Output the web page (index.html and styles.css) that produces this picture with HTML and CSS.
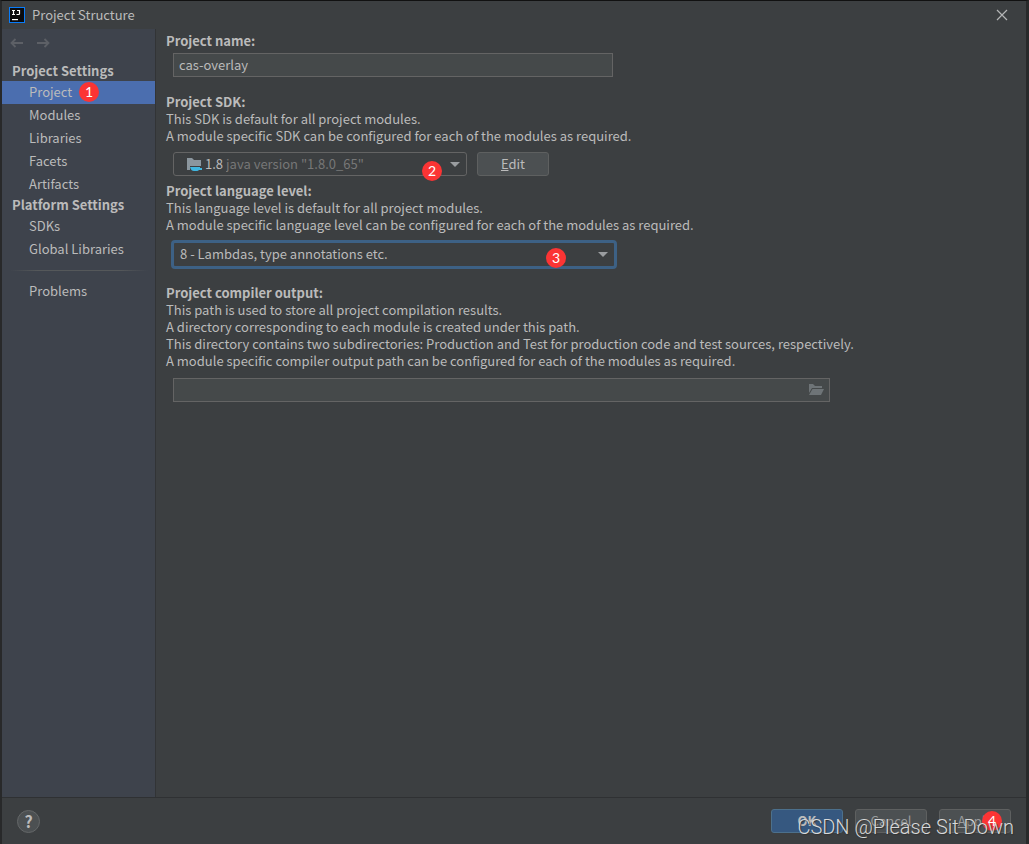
FILE: index.html
```html
<!DOCTYPE html>
<html lang="en">
<head>
<meta charset="utf-8">
<title>Project Structure</title>
<meta name="viewport" content="width=device-width, initial-scale=1">
<link rel="stylesheet" href="styles.css">
</head>
<body>
<div class="dialog">
  <header class="titlebar">
    <svg class="logo" width="16" height="16" viewBox="0 0 16 16" aria-hidden="true">
      <rect width="16" height="16" fill="#087cfa"/>
      <rect x="1" y="1" width="14" height="14" fill="#0b0b0d"/>
      <path d="M3 3.500h3M4.500 3.500v4M3 7.500h3M8 3.500h2.500v3.200q0 .8-.8.8H7.500" fill="none" stroke="#fff" stroke-width="1.200"/>
      <path d="M3 12h6v1.200H3z" fill="#fff"/>
    </svg>
    <h1 class="title">Project Structure</h1>
    <button class="close" type="button" aria-label="Close">
      <svg width="12" height="12" viewBox="0 0 12 12"><path d="M1 1l10 10M11 1L1 11" stroke="#b4b5b6" stroke-width="1.200" fill="none"/></svg>
    </button>
  </header>

  <div class="content">
    <aside class="sidebar">
      <div class="history">
        <button class="arrow" type="button" aria-label="Back"><svg width="14" height="12" viewBox="0 0 14 12"><path d="M13 6H1.500M5.500 2L1.500 6l4 4" fill="none" stroke="#5d6066" stroke-width="1.800"/></svg></button>
        <button class="arrow" type="button" aria-label="Forward"><svg width="14" height="12" viewBox="0 0 14 12"><path d="M0 6h11.500M7.500 2l4 4-4 4" fill="none" stroke="#5d6066" stroke-width="1.800"/></svg></button>
      </div>
      <nav class="nav">
        <h2 class="group">Project Settings</h2>
        <a class="item selected" href="#project">Project<span class="badge badge-project">1</span></a>
        <a class="item" href="#modules">Modules</a>
        <a class="item" href="#libraries">Libraries</a>
        <a class="item" href="#facets">Facets</a>
        <a class="item" href="#artifacts">Artifacts</a>
        <h2 class="group">Platform Settings</h2>
        <a class="item" href="#sdks">SDKs</a>
        <a class="item" href="#global">Global Libraries</a>
        <hr class="rule">
        <a class="item" href="#problems">Problems</a>
      </nav>
    </aside>

    <main class="panel">
      <section class="section section-name">
        <label class="heading" for="name">Project name:</label>
        <input class="field name" id="name" type="text" value="cas-overlay">
      </section>

      <section class="section section-sdk">
        <label class="heading" for="sdk">Project SDK:</label>
        <p>This SDK is default for all project modules.</p>
        <p>A module specific SDK can be configured for each of the modules as required.</p>
        <div class="row">
          <div class="combo sdk">
            <svg class="folder" width="16" height="16" viewBox="0 0 16 16" aria-hidden="true">
              <path d="M1 2h5l2 2h7v6H4v4H1z" fill="#8b969e"/>
              <path d="M4 11h10v1h2v2h-3c-.6.700-1.200 1-2 1H8c-1.800 0-3-1-4-4z" fill="#40b6e0"/>
            </svg>
            <span class="version">1.8</span>
            <select class="choice muted" id="sdk"><option>java version "1.8.0_65"</option></select>
            <span class="badge badge-sdk">2</span>
          </div>
          <button class="button" type="button"><u>E</u>dit</button>
        </div>
      </section>

      <section class="section section-level">
        <label class="heading" for="level">Project language level:</label>
        <p>This language level is default for all project modules.</p>
        <p>A module specific language level can be configured for each of the modules as required.</p>
        <div class="combo level">
          <select class="choice" id="level"><option>8 - Lambdas, type annotations etc.</option></select>
          <span class="badge badge-level">3</span>
        </div>
      </section>

      <section class="section">
        <label class="heading" for="output">Project compiler output:</label>
        <p>This path is used to store all project compilation results.</p>
        <p>A directory corresponding to each module is created under this path.</p>
        <p>This directory contains two subdirectories: Production and Test for production code and test sources, respectively.</p>
        <p>A module specific compiler output path can be configured for each of the modules as required.</p>
        <div class="field output">
          <input class="path" id="output" type="text">
          <button class="browse" type="button" aria-label="Browse">
            <svg width="16" height="12" viewBox="0 0 16 12"><path d="M1 0h4l2 2h7v2H4L1 9z" fill="#6e7477"/><path d="M4.500 5H16l-3 6H1z" fill="#6e7477"/></svg>
          </button>
        </div>
      </section>
    </main>
  </div>

  <footer class="footer">
    <button class="help" type="button" aria-label="Help">?</button>
    <div class="actions">
      <button class="button primary" type="button">OK</button>
      <button class="button dim" type="button">Cancel</button>
      <button class="button dim" type="button"><u>A</u>pply<span class="badge badge-apply">4</span></button>
    </div>
    <span class="watermark">CSDN @Please Sit Down</span>
  </footer>
</div>
</body>
</html>
```
FILE: styles.css
```css
* {
  box-sizing: border-box;
}

body {
  margin: 0;
  background: #252627;
  color: #bbbbbb;
  font: 13px/17px "Noto Sans CJK SC", "Noto Sans", sans-serif;
}

button,
input,
select {
  font: inherit;
  color: inherit;
  margin: 0;
}

h1,
h2,
p {
  margin: 0;
  font-size: inherit;
}

.dialog {
  display: flex;
  flex-direction: column;
  min-height: 100vh;
  border: solid #28292a;
  border-width: 1px 3px 0 2px;
  border-top-color: #111111;
  background: #3c3f41;
}

.titlebar {
  display: flex;
  align-items: center;
  gap: 7px;
  height: 28px;
  padding: 0 18px 0 7px;
}

.title {
  flex: 1;
  padding-bottom: 2px;
  font-weight: 400;
}

.close,
.arrow,
.browse {
  display: flex;
  padding: 0;
  border: 0;
  background: none;
}

.content {
  display: flex;
  flex: 1;
}

.sidebar {
  width: 154px;
  border-right: 1px solid #323436;
  background: #3e434c;
}

.history {
  display: flex;
  align-items: center;
  gap: 13px;
  height: 28px;
  padding-left: 8px;
}

.nav {
  display: flex;
  flex-direction: column;
  padding-top: 5px;
}

.group {
  padding: 0 0 2px 10px;
  font-weight: 700;
  line-height: 17px;
}

.item {
  position: relative;
  padding: 0 0 2px 27px;
  color: inherit;
  line-height: 21px;
  text-decoration: none;
}

.selected {
  background: #4b6eaf;
}

.rule {
  width: 138px;
  height: 1px;
  margin: 9px 0 9px 8px;
  border: 0;
  background: linear-gradient(90deg, transparent, #55585a 20%, #55585a 80%, transparent);
}

.panel {
  flex: 1;
  display: flex;
  flex-direction: column;
  padding: 3px 10px;
}

.section {
  display: flex;
  flex-direction: column;
}

.heading {
  font-weight: 700;
}

.section-name {
  gap: 4px;
  margin-bottom: 16px;
}

.section-sdk {
  margin-bottom: 6px;
}

.section-level {
  margin-bottom: 15px;
}

.field {
  height: 24px;
  margin-left: 7px;
  padding: 0 5px 2px;
  border: 1px solid #646464;
  background: #45494a;
}

.name {
  width: 440px;
}

.row {
  display: flex;
  gap: 10px;
  margin: 8px 0 0 7px;
}

.combo {
  position: relative;
  display: flex;
  align-items: center;
  border: 1px solid #646464;
  border-radius: 3px;
}

.combo::after {
  content: "";
  position: absolute;
  right: 6px;
  border: solid transparent;
  border-width: 5px 5px 0;
  border-top-color: #9a9da0;
  pointer-events: none;
}

.sdk {
  width: 294px;
  height: 24px;
  padding-left: 12px;
}

.level {
  width: 446px;
  height: 29px;
  margin: 7px 0 0 5px;
  padding-left: 6px;
  border: 3px solid #3d6185;
  border-radius: 4px;
}

.version {
  margin: 0 3px;
  padding-bottom: 2px;
}

.choice {
  flex: 1;
  min-width: 0;
  padding: 0 0 2px;
  border: 0;
  outline: 0;
  appearance: none;
  background: #3c3f41;
}

.muted {
  color: #777777;
}

.output {
  display: flex;
  align-items: center;
  width: 657px;
  margin-top: 9px;
  padding-bottom: 0;
}

.path {
  flex: 1;
  min-width: 0;
  padding: 0;
  border: 0;
  outline: 0;
  background: none;
}

.button {
  position: relative;
  width: 72px;
  height: 24px;
  padding: 0 0 2px;
  border: 1px solid #5e6060;
  border-radius: 3px;
  background: #4c5052;
}

.primary {
  border-color: #4c708c;
  background: #365880;
  font-weight: 700;
}

.dim {
  color: #999b9c;
}

.footer {
  position: relative;
  display: flex;
  align-items: center;
  justify-content: space-between;
  height: 47px;
  padding: 0 15px;
  border-top: 1px solid #2f3133;
}

.help {
  width: 23px;
  height: 23px;
  padding: 0;
  border: 1px solid #646768;
  border-radius: 50%;
  background: #4c5052;
  font-size: 16px;
  font-weight: 700;
}

.actions {
  display: flex;
  gap: 12px;
}

.badge {
  position: absolute;
  width: 20px;
  height: 20px;
  border-radius: 50%;
  background: #fb3434;
  color: #ffffff;
  font-family: Lato, sans-serif;
  font-size: 14px;
  font-weight: 400;
  line-height: 20px;
  text-align: center;
}

.badge-project {
  top: 1px;
  left: 77px;
}

.badge-sdk {
  top: 8px;
  right: 24px;
}

.badge-level {
  top: 5px;
  right: 48px;
}

.badge-apply {
  top: 1px;
  right: 8px;
}

.watermark {
  position: absolute;
  right: 12px;
  bottom: 5px;
  color: #d8d9da;
  font: 300 20px/24px Roboto, "Liberation Sans", sans-serif;
  text-shadow: 1px 1px 1px #333333;
  pointer-events: none;
}
```
